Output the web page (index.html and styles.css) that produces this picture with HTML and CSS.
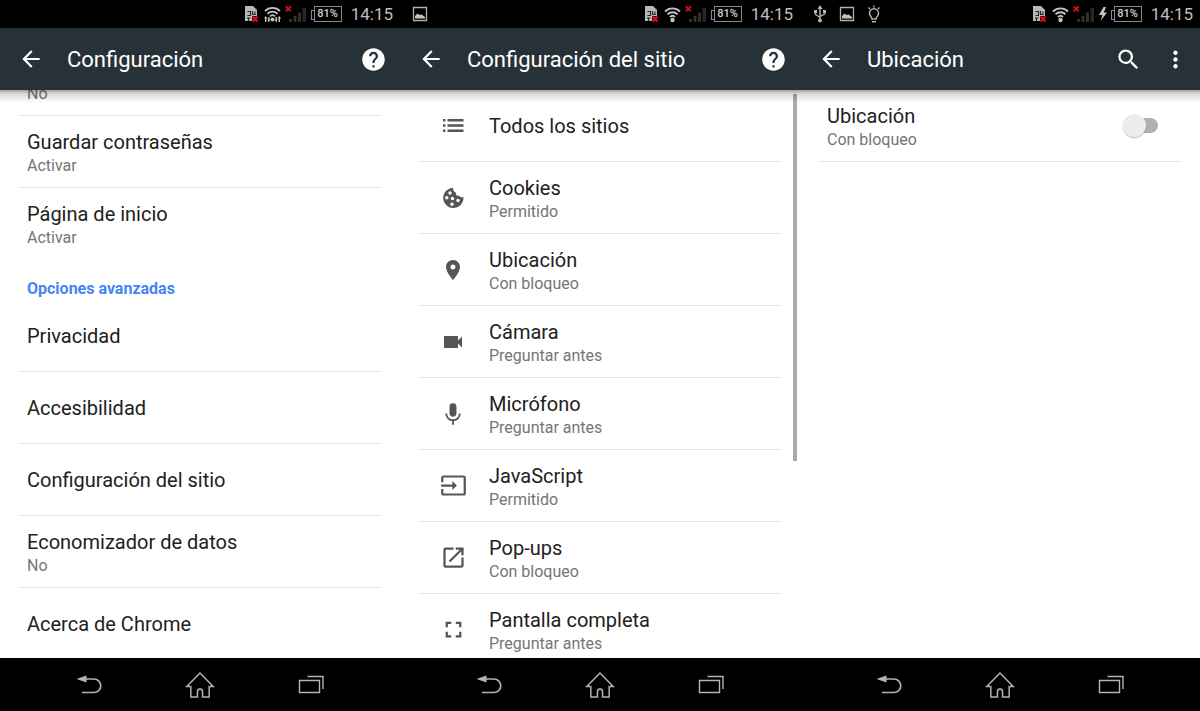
FILE: index.html
```html
<!DOCTYPE html>
<html lang="es">

<head>
    <meta charset="UTF-8">
    <meta name="viewport" content="width=device-width, initial-scale=1.0">
    <title>Configuración</title>
    <link rel="stylesheet" href="styles.css">
</head>

<body>
    <!-- Shared icons -->
    <svg class="sprite" aria-hidden="true">
        <symbol id="sim" viewBox="0 0 16 18">
            <path d="M1 1h8l4 4v6H8v5H1z" fill="#b8b8b8"/>
            <path d="M3.500 6.500h3v4h-3M8.500 6v3.500H11V6.500M3 13h3.500M4.500 13v3" fill="none" stroke="#222" stroke-width="1.100"/>
            <path d="M8.500 11.500l5 5M13.500 11.500l-5 5" stroke="#d80f1b" stroke-width="2.200"/>
        </symbol>
        <symbol id="wifi" viewBox="0 0 17 18">
            <g fill="none" stroke="#c4c4c4" stroke-width="1.900">
                <path d="M1 6.500a10.500 10.500 0 0 1 15 0"/>
                <path d="M3.500 9.300a7 7 0 0 1 10 0"/>
                <path d="M6 12a3.600 3.600 0 0 1 5 0"/>
            </g>
            <circle cx="8.500" cy="15" r="2.200" fill="#c4c4c4"/>
        </symbol>
        <symbol id="signal" viewBox="0 0 22 18">
            <path d="M4 14h3v3H4zM8.500 11h3v6h-3zM13 7.500h3V17h-3z" fill="#303030"/>
            <path d="M17.500 3h3.500v14h-3.500z" fill="#262626"/>
            <path d="M.800 1.300l5 5M5.800 1.300l-5 5" stroke="#d80f1b" stroke-width="1.900"/>
        </symbol>
        <symbol id="picture" viewBox="0 0 16 16">
            <path d="M1.500 1.500h13v13h-13z" fill="none" stroke="#b0b0b0" stroke-width="1.300"/>
            <path d="M3 12.500V10L5.500 7.500l2 1.500L9.500 8.500 13 11v1.500z" fill="#c4c4c4"/>
        </symbol>
        <symbol id="back" viewBox="0 0 24 24">
            <path d="M20 11H7.830l5.590-5.590L12 4l-8 8 8 8 1.410-1.410L7.830 13H20v-2z"/>
        </symbol>
        <symbol id="help" viewBox="0 0 24 24">
            <path d="M12 2C6.480 2 2 6.480 2 12s4.480 10 10 10 10-4.480 10-10S17.520 2 12 2zm1 17h-2v-2h2v2zm2.070-7.750l-.900.920C13.450 12.900 13 13.500 13 15h-2v-.500c0-1.100.450-2.100 1.170-2.830l1.240-1.260c.370-.360.590-.860.590-1.410 0-1.100-.900-2-2-2s-2 .900-2 2H8c0-2.210 1.790-4 4-4s4 1.790 4 4c0 .880-.360 1.680-.930 2.250z"/>
        </symbol>
        <symbol id="nav-back" viewBox="0 0 30 28">
            <path d="M7 8h13a6.500 6.500 0 0 1 0 13.500H8" fill="none" stroke="#b4b4b4" stroke-width="1.700"/>
            <path d="M2.500 8l10-3.500v7z" fill="#b4b4b4"/>
        </symbol>
        <symbol id="nav-home" viewBox="0 0 30 28">
            <path d="M15 2L1.800 15.500h4V26h6.700v-5.500a2.500 2.500 0 0 1 5 0V26h6.700V15.500h4z" fill="none" stroke="#b4b4b4" stroke-width="1.500"/>
        </symbol>
        <symbol id="nav-recent" viewBox="0 0 30 28">
            <path d="M3.500 9.500h20v12h-20zM11.500 5.500h15.500V18" fill="none" stroke="#b4b4b4" stroke-width="1.400"/>
        </symbol>
    </svg>

    <main class="screens">
        <!-- Settings -->
        <section class="screen">
            <div class="status-bar">
                <div class="notifications"></div>
                <div class="system">
                    <svg width="16" height="18"><use href="#sim"/></svg>
                    <svg width="17" height="18" viewBox="0 0 17 18">
                        <g fill="none" stroke="#c4c4c4" stroke-width="1.800">
                            <path d="M1 6a10.500 10.500 0 0 1 15 0"/>
                            <path d="M3.500 8.800a7 7 0 0 1 10 0"/>
                            <path d="M6 11.300a3.600 3.600 0 0 1 5 0"/>
                        </g>
                        <circle cx="8.500" cy="14.500" r="2" fill="#c4c4c4"/>
                        <path d="M0 13.500l1.700-2.500 1.700 2.500h-1V17H1v-3.500zM3.300 14.500h1V12h1.400v2.500h.600L4.800 17.500zM10.700 14.500h.800V12h1.400v2.500h.800L12.200 17.500zM13.600 13.500l1.700-2.500 1.700 2.500h-1V17h-1.400v-3.500z" fill="#c4c4c4"/>
                    </svg>
                    <svg width="22" height="18"><use href="#signal"/></svg>
                    <span class="battery">81%</span>
                    <time>14:15</time>
                </div>
            </div>
            <header class="app-bar">
                <button class="icon-btn" aria-label="Atrás"><svg width="26" height="26"><use href="#back"/></svg></button>
                <h1>Configuración</h1>
                <button class="icon-btn" aria-label="Ayuda"><svg width="27" height="27"><use href="#help"/></svg></button>
            </header>
            <div class="content">
                <ul class="list scrolled">
                    <li><a href="#"><span class="text"><span class="title"></span><span class="summary">No</span></span></a></li>
                    <li><a href="#"><span class="text"><span class="title">Guardar contraseñas</span><span class="summary">Activar</span></span></a></li>
                    <li class="last"><a href="#"><span class="text"><span class="title">Página de inicio</span><span class="summary">Activar</span></span></a></li>
                    <li class="category"><h2>Opciones avanzadas</h2></li>
                    <li><a href="#"><span class="title">Privacidad</span></a></li>
                    <li><a href="#"><span class="title">Accesibilidad</span></a></li>
                    <li><a href="#"><span class="title">Configuración del sitio</span></a></li>
                    <li><a href="#"><span class="text"><span class="title">Economizador de datos</span><span class="summary">No</span></span></a></li>
                    <li class="last"><a href="#"><span class="title">Acerca de Chrome</span></a></li>
                </ul>
            </div>
            <nav class="nav-bar">
                <button aria-label="Atrás"><svg width="30" height="28"><use href="#nav-back"/></svg></button>
                <button aria-label="Inicio"><svg width="30" height="28"><use href="#nav-home"/></svg></button>
                <button aria-label="Recientes"><svg width="30" height="28"><use href="#nav-recent"/></svg></button>
            </nav>
        </section>

        <!-- Site settings -->
        <section class="screen">
            <div class="status-bar">
                <div class="notifications">
                    <svg width="16" height="16"><use href="#picture"/></svg>
                </div>
                <div class="system">
                    <svg width="16" height="18"><use href="#sim"/></svg>
                    <svg width="17" height="18"><use href="#wifi"/></svg>
                    <svg width="22" height="18"><use href="#signal"/></svg>
                    <span class="battery">81%</span>
                    <time>14:15</time>
                </div>
            </div>
            <header class="app-bar">
                <button class="icon-btn" aria-label="Atrás"><svg width="26" height="26"><use href="#back"/></svg></button>
                <h1>Configuración del sitio</h1>
                <button class="icon-btn" aria-label="Ayuda"><svg width="27" height="27"><use href="#help"/></svg></button>
            </header>
            <div class="content">
                <ul class="list">
                    <li><a href="#">
                        <span class="icon"><svg width="22" height="15" viewBox="0 0 22 15"><path d="M1 1h2.400v2.400H1zM1 6.300h2.400v2.400H1zM1 11.600h2.400V14H1zM5.500 1H21.500v2.400h-16zM5.500 6.300H21.500v2.400h-16zM5.500 11.600H21.500V14h-16z"/></svg></span>
                        <span class="title">Todos los sitios</span>
                    </a></li>
                    <li><a href="#">
                        <span class="icon"><svg width="22" height="22" viewBox="0 0 22 22">
                            <path d="M11 .700A10.200 10.200 0 1 0 21.500 10C19.800 10.500 18 10 17 8.700 15 9 13.500 7.500 14 5.700 12 5 11 3 11 .700z"/>
                            <g fill="#fff"><circle cx="8" cy="6" r="1.700"/><circle cx="4.800" cy="10.800" r="1.700"/><circle cx="10.500" cy="11.500" r="1.700"/><circle cx="16" cy="13.500" r="1.700"/><circle cx="10" cy="17.200" r="1.700"/></g>
                        </svg></span>
                        <span class="text"><span class="title">Cookies</span><span class="summary">Permitido</span></span>
                    </a></li>
                    <li><a href="#">
                        <span class="icon"><svg width="24" height="24" viewBox="0 0 24 24"><path d="M12 2C8.130 2 5 5.130 5 9c0 5.250 7 13 7 13s7-7.750 7-13c0-3.870-3.130-7-7-7zm0 9.500a2.500 2.500 0 1 1 0-5 2.500 2.500 0 0 1 0 5z"/></svg></span>
                        <span class="text"><span class="title">Ubicación</span><span class="summary">Con bloqueo</span></span>
                    </a></li>
                    <li><a href="#">
                        <span class="icon"><svg width="24" height="24" viewBox="0 0 24 24"><path d="M17 10.500V7c0-.550-.450-1-1-1H4c-.550 0-1 .450-1 1v10c0 .550.450 1 1 1h12c.550 0 1-.450 1-1v-3.500l4 4v-11l-4 4z"/></svg></span>
                        <span class="text"><span class="title">Cámara</span><span class="summary">Preguntar antes</span></span>
                    </a></li>
                    <li><a href="#">
                        <span class="icon"><svg width="26" height="26" viewBox="0 0 24 24"><path d="M12 14.500c1.800 0 3.200-1.500 3.200-3.300V5.300a3.200 3.200 0 0 0-6.400 0v5.900c0 1.800 1.400 3.300 3.200 3.300z"/><path d="M5.700 11.500a6.300 6.300 0 0 0 12.600 0M12 18v4" fill="none" stroke="#555" stroke-width="1.700"/></svg></span>
                        <span class="text"><span class="title">Micrófono</span><span class="summary">Preguntar antes</span></span>
                    </a></li>
                    <li><a href="#">
                        <span class="icon"><svg width="27" height="27" viewBox="0 0 24 24"><path d="M21 3.010H3c-1.100 0-2 .900-2 2V9h2V4.990h18v14.030H3V15H1v4.010c0 1.100.900 1.980 2 1.980h18c1.100 0 2-.880 2-1.980v-14c0-1.110-.900-2-2-2zM11 16l4-4-4-4v3H1v2h10v3z"/></svg></span>
                        <span class="text"><span class="title">JavaScript</span><span class="summary">Permitido</span></span>
                    </a></li>
                    <li><a href="#">
                        <span class="icon"><svg width="27" height="27" viewBox="0 0 24 24"><path d="M19 19H5V5h7V3H5a2 2 0 0 0-2 2v14a2 2 0 0 0 2 2h14c1.100 0 2-.900 2-2v-7h-2v7zM14 3v2h3.590l-9.830 9.830 1.410 1.410L19 6.410V10h2V3h-7z"/></svg></span>
                        <span class="text"><span class="title">Pop-ups</span><span class="summary">Con bloqueo</span></span>
                    </a></li>
                    <li class="last"><a href="#">
                        <span class="icon"><svg width="27" height="27" viewBox="0 0 24 24"><path d="M7 14H5v5h5v-2H7v-3zm-2-4h2V7h3V5H5v5zm12 7h-3v2h5v-5h-2v3zM14 5v2h3v3h2V5h-5z"/></svg></span>
                        <span class="text"><span class="title">Pantalla completa</span><span class="summary">Preguntar antes</span></span>
                    </a></li>
                </ul>
                <div class="scrollbar"></div>
            </div>
            <nav class="nav-bar">
                <button aria-label="Atrás"><svg width="30" height="28"><use href="#nav-back"/></svg></button>
                <button aria-label="Inicio"><svg width="30" height="28"><use href="#nav-home"/></svg></button>
                <button aria-label="Recientes"><svg width="30" height="28"><use href="#nav-recent"/></svg></button>
            </nav>
        </section>

        <!-- Location -->
        <section class="screen">
            <div class="status-bar">
                <div class="notifications">
                    <svg width="16" height="18" viewBox="0 0 16 18">
                        <path d="M8 3v12M3.500 6v3.500L8 12.500M12.500 6v3L8 11.500" fill="none" stroke="#b4b4b4" stroke-width="1.400"/>
                        <path d="M8 0l2.500 4h-5zM2 5h3v3H2zM11 5h3v3h-3z" fill="#b4b4b4"/>
                        <circle cx="8" cy="15.500" r="1.900" fill="#b4b4b4"/>
                    </svg>
                    <svg width="16" height="16"><use href="#picture"/></svg>
                    <svg width="16" height="18" viewBox="0 0 16 18">
                        <path d="M6 14C6 12 3.500 11 3.500 8.300a4.500 4.500 0 0 1 9 0c0 2.700-2.500 3.700-2.500 5.700zM6 16.700h4M8 .500v2M2.500 2.500L4 4M13.500 2.500L12 4" fill="none" stroke="#b4b4b4" stroke-width="1.500"/>
                    </svg>
                </div>
                <div class="system">
                    <svg width="16" height="18"><use href="#sim"/></svg>
                    <svg width="17" height="18"><use href="#wifi"/></svg>
                    <svg width="22" height="18"><use href="#signal"/></svg>
                    <svg width="8" height="18" viewBox="0 0 8 18"><path d="M4.500 2L0 10h3.500L1.500 16 8 7.500H4.800L7 2z" fill="#c4c4c4"/></svg>
                    <span class="battery">81%</span>
                    <time>14:15</time>
                </div>
            </div>
            <header class="app-bar">
                <button class="icon-btn" aria-label="Atrás"><svg width="26" height="26"><use href="#back"/></svg></button>
                <h1>Ubicación</h1>
                <button class="icon-btn" aria-label="Buscar"><svg width="27" height="27" viewBox="0 0 24 24"><path d="M15.500 14h-.790l-.280-.270A6.470 6.470 0 0 0 16 9.500 6.500 6.500 0 1 0 9.500 16c1.610 0 3.090-.590 4.230-1.570l.270.280v.790l5 4.990L20.490 19l-4.990-5zm-6 0C7.010 14 5 11.990 5 9.500S7.010 5 9.500 5 14 7.010 14 9.500 11.990 14 9.500 14z"/></svg></button>
                <button class="icon-btn more" aria-label="Más opciones"><svg width="27" height="27" viewBox="0 0 24 24"><path d="M12 8c1.100 0 2-.900 2-2s-.900-2-2-2-2 .900-2 2 .900 2 2 2zm0 2c-1.100 0-2 .900-2 2s.900 2 2 2 2-.900 2-2-.900-2-2-2zm0 6c-1.100 0-2 .900-2 2s.900 2 2 2 2-.900 2-2-.900-2-2-2z"/></svg></button>
            </header>
            <div class="content">
                <ul class="list">
                    <li>
                        <label class="switch-row" for="location">
                            <span class="text"><span class="title">Ubicación</span><span class="summary">Con bloqueo</span></span>
                            <input type="checkbox" class="switch" id="location">
                        </label>
                    </li>
                </ul>
            </div>
            <nav class="nav-bar">
                <button aria-label="Atrás"><svg width="30" height="28"><use href="#nav-back"/></svg></button>
                <button aria-label="Inicio"><svg width="30" height="28"><use href="#nav-home"/></svg></button>
                <button aria-label="Recientes"><svg width="30" height="28"><use href="#nav-recent"/></svg></button>
            </nav>
        </section>
    </main>
</body>

</html>
```

FILE: styles.css
```css
* {
    margin: 0;
    padding: 0;
    box-sizing: border-box;
}

body {
    font-family: Roboto, "Liberation Sans", sans-serif;
    background-color: #fff;
    color: #212121;
}

button {
    background: none;
    border: none;
    cursor: pointer;
}

svg {
    display: block;
    flex-shrink: 0;
}

.sprite {
    position: absolute;
    width: 0;
    height: 0;
}

.screens {
    display: grid;
    grid-template-columns: repeat(3, 1fr);
    height: 100vh;
}

.screen {
    display: flex;
    flex-direction: column;
    min-width: 0;
    min-height: 0;
}

/* Status bar */
.status-bar {
    display: flex;
    justify-content: space-between;
    align-items: center;
    height: 28px;
    padding: 0 7px 0 12px;
    background-color: #000;
    flex-shrink: 0;
}

.notifications {
    display: flex;
    align-items: center;
    gap: 11px;
}

.system {
    display: flex;
    align-items: center;
    gap: 4px;
    color: #bdbdbd;
}

.battery {
    position: relative;
    width: 28px;
    height: 16px;
    margin-left: 3px;
    border: 1px solid #8a8a8a;
    font-size: 11px;
    font-weight: 500;
    line-height: 14px;
    text-align: center;
    color: #d0d0d0;
}

.battery::before {
    content: "";
    position: absolute;
    left: -4px;
    top: 3px;
    width: 3px;
    height: 8px;
    border: 1px solid #8a8a8a;
    border-right: none;
}

.system time {
    font-size: 17px;
    line-height: 28px;
    margin-left: 5px;
}

/* App bar */
.app-bar {
    display: flex;
    align-items: center;
    gap: 21px;
    height: 62px;
    padding: 0 13px 0 17px;
    background-color: #263238;
    color: #fff;
    position: relative;
    z-index: 1;
    flex-shrink: 0;
}

.app-bar::after {
    content: "";
    position: absolute;
    left: 0;
    right: 0;
    top: 100%;
    height: 13px;
    background: linear-gradient(rgba(0, 0, 0, 0.36), rgba(0, 0, 0, 0.14) 30%, rgba(0, 0, 0, 0));
    pointer-events: none;
}

.app-bar h1 {
    flex: 1;
    padding: 2px 0 0 1px;
    font-size: 22px;
    font-weight: normal;
    line-height: 28px;
    white-space: nowrap;
}

.icon-btn {
    display: flex;
    justify-content: center;
    align-items: center;
    width: 28px;
    height: 28px;
    fill: #fff;
}

.icon-btn.more {
    width: 24px;
}

/* Content */
.content {
    flex: 1;
    min-height: 0;
    overflow: hidden;
    position: relative;
}

.list {
    list-style: none;
    margin: 0 18px;
}

/* scroll position: the first row is mostly under the app bar */
.list.scrolled {
    margin-top: -46px;
}

.list li {
    height: 72px;
    border-bottom: 1px solid #e6e6e6;
}

.list li.last {
    border-bottom-color: transparent;
}

.list li.category {
    display: flex;
    align-items: center;
    height: 40px;
    padding: 18px 9px 0;
    border-bottom: none;
}

.category h2 {
    font-size: 16px;
    line-height: 22px;
    color: #4285f4;
}

.list a,
.switch-row {
    display: flex;
    align-items: center;
    gap: 10px;
    height: 100%;
    padding: 0 9px;
    color: inherit;
    text-decoration: none;
}

.icon {
    display: flex;
    justify-content: center;
    width: 52px;
    fill: #555;
}

.text {
    display: flex;
    flex-direction: column;
    flex: 1;
    padding-top: 2px;
}

.title {
    min-height: 26px;
    font-size: 20px;
    line-height: 26px;
}

.summary {
    font-size: 16px;
    line-height: 22px;
    color: #757575;
}

.scrollbar {
    position: absolute;
    top: 4px;
    right: 3px;
    width: 4px;
    height: 367px;
    background-color: #a9a9a9;
}

/* Switch */
.switch-row {
    padding-right: 24px;
}

.switch {
    appearance: none;
    display: flex;
    align-items: center;
    width: 32px;
    height: 15px;
    border-radius: 8px;
    background-color: #b0b0b0;
    cursor: pointer;
}

.switch::before {
    content: "";
    width: 23px;
    height: 23px;
    flex-shrink: 0;
    margin-left: -3px;
    border-radius: 50%;
    background-color: #ececec;
    box-shadow: 0 1px 1px rgba(0, 0, 0, 0.25);
}

.switch:checked {
    background-color: #a0c3ff;
}

.switch:checked::before {
    margin-left: 12px;
    background-color: #4285f4;
}

/* Navigation bar */
.nav-bar {
    display: grid;
    grid-template-columns: repeat(3, 1fr);
    height: 53px;
    padding: 0 34px;
    background-color: #000;
    flex-shrink: 0;
}

.nav-bar button {
    display: flex;
    justify-content: center;
    align-items: center;
}
```
